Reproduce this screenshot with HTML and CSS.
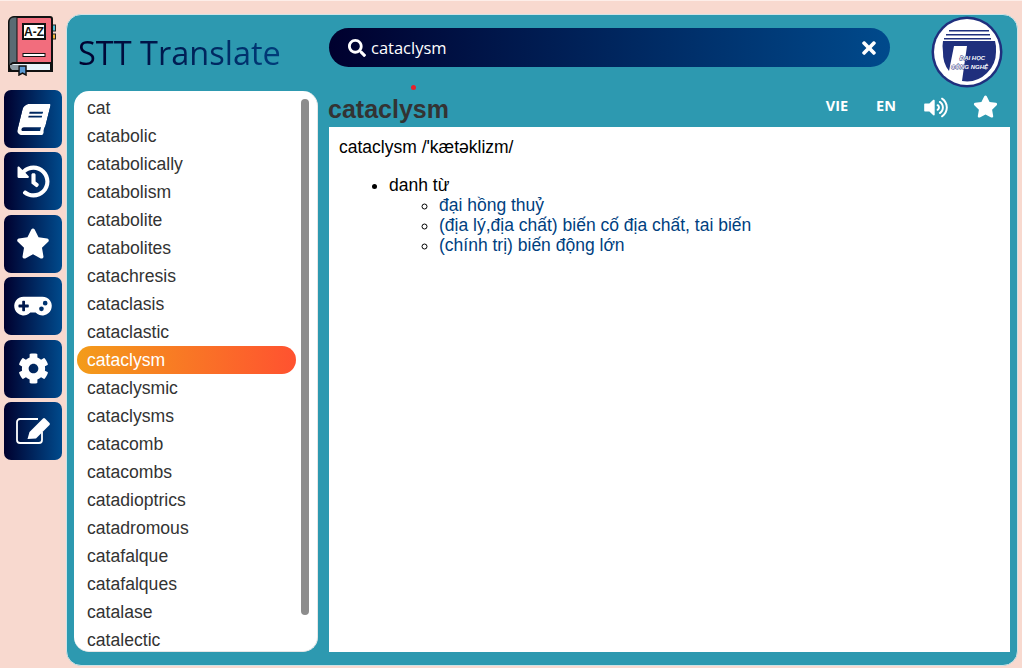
FILE: index.html
```html
<!DOCTYPE html>
<html lang="vi">
<head>
  <meta charset="UTF-8">
  <title>STT Translate</title>
  <link rel="stylesheet" href="styles.css">
</head>
<body>
<div class="app">
  <div class="side">
    <svg class="book-logo" viewBox="0 0 48 60">
      <rect x="44" y="9" width="3.500" height="6" fill="#4fc3dc" stroke="#222" stroke-width="1"/>
      <rect x="44" y="18" width="3.500" height="5" fill="#f5b83d" stroke="#222" stroke-width="1"/>
      <path d="M6 1h36a2 2 0 0 1 2 2v52H1V6a5 5 0 0 1 5-5z" fill="#f26d7d" stroke="#111" stroke-width="2"/>
      <path d="M6 1a5 5 0 0 0-5 5v44h8V1z" fill="#5a6b73" stroke="#111" stroke-width="1"/>
      <path d="M6 47h37v8H6a4 4 0 0 1 0-8z" fill="#e8f4fb" stroke="#111" stroke-width="2"/>
      <path d="M2 49h8v5H6a4 4 0 0 1-4-3z" fill="#8c9aa1"/>
      <path d="M11 50h7v9l-3.500-2-3.500 2z" fill="#5b9bd5" stroke="#111" stroke-width="1.500"/>
      <rect x="15" y="8" width="22" height="15" fill="#fff" stroke="#111" stroke-width="2"/>
      <text x="26" y="20" class="az">A-Z</text>
      <rect x="15" y="37.500" width="22" height="3" fill="#fff" stroke="#111" stroke-width="1"/>
    </svg>
    <div class="nav">
      <a class="nav-btn"><svg class="ic-book" width="27" height="31" viewBox="0 0 448 512"><path d="M448 360V24c0-13.3-10.7-24-24-24H96C43 0 0 43 0 96v320c0 53 43 96 96 96h328c13.3 0 24-10.7 24-24v-16c0-7.5-3.5-14.3-8.9-18.7-4.2-15.4-4.2-59.3 0-74.7 5.4-4.3 8.9-11.1 8.9-18.6zM128 134c0-3.3 2.7-6 6-6h212c3.3 0 6 2.7 6 6v20c0 3.3-2.7 6-6 6H134c-3.3 0-6-2.7-6-6v-20zm0 64c0-3.3 2.7-6 6-6h212c3.3 0 6 2.7 6 6v20c0 3.3-2.7 6-6 6H134c-3.3 0-6-2.7-6-6v-20zm253.4 250H96c-17.7 0-32-14.3-32-32 0-17.6 14.4-32 32-32h285.4c-1.9 17.1-1.9 46.9 0 64z"/></svg></a>
      <a class="nav-btn"><svg width="33" height="33" viewBox="0 0 512 512"><path d="M504 255.531c.253 136.64-111.18 248.372-247.82 248.468-59.015.042-113.223-20.53-155.822-54.911-11.077-8.94-11.905-25.541-1.839-35.607l11.267-11.267c8.609-8.609 22.353-9.551 31.891-1.984C173.062 425.135 212.781 440 256 440c101.705 0 184-82.311 184-184 0-101.705-82.311-184-184-184-48.814 0-93.149 18.969-126.068 49.932l50.754 50.754c10.08 10.08 2.941 27.314-11.313 27.314H24c-8.837 0-16-7.163-16-16V38.627c0-14.254 17.234-21.393 27.314-11.314l49.372 49.372C129.209 34.136 189.552 8 256 8c136.81 0 247.747 110.78 248 247.531zm-180.912 78.784l9.823-12.63c8.138-10.463 6.253-25.542-4.21-33.679L288 256.349V152c0-13.255-10.745-24-24-24h-16c-13.255 0-24 10.745-24 24v135.651l65.409 50.874c10.463 8.137 25.541 6.253 33.679-4.21z"/></svg></a>
      <a class="nav-btn"><svg width="34" height="31" viewBox="0 0 576 512"><path d="M259.3 17.8L194 150.2 47.9 171.5c-26.2 3.8-36.7 36.1-17.7 54.6l105.7 103-25 145.5c-4.5 26.3 23.2 46 46.4 33.7L288 439.6l130.7 68.7c23.2 12.2 50.9-7.4 46.4-33.7l-25-145.5 105.7-103c19-18.5 8.5-50.8-17.7-54.6L382 150.2 316.7 17.8c-11.7-23.6-45.6-23.9-57.4 0z"/></svg></a>
      <a class="nav-btn"><svg width="38" height="30" viewBox="0 0 640 512"><path d="M480.07 96H160a160 160 0 1 0 114.24 272h91.52A160 160 0 1 0 480.07 96zM248 268a12 12 0 0 1-12 12h-52v52a12 12 0 0 1-12 12h-24a12 12 0 0 1-12-12v-52H84a12 12 0 0 1-12-12v-24a12 12 0 0 1 12-12h52v-52a12 12 0 0 1 12-12h24a12 12 0 0 1 12 12v52h52a12 12 0 0 1 12 12zm216 76a40 40 0 1 1 40-40 40 40 0 0 1-40 40zm64-96a40 40 0 1 1 40-40 40 40 0 0 1-40 40z"/></svg></a>
      <a class="nav-btn"><svg width="31" height="31" viewBox="0 0 512 512"><path d="M487.4 315.7l-42.6-24.6c4.3-23.2 4.3-47 0-70.2l42.6-24.6c4.9-2.8 7.1-8.6 5.5-14-11.1-35.6-30-67.8-54.7-94.6-3.8-4.1-10-5.1-14.8-2.3L380.8 110c-17.9-15.4-38.5-27.3-60.8-35.1V25.8c0-5.6-3.9-10.5-9.4-11.7-36.7-8.2-74.3-7.8-109.2 0-5.5 1.2-9.4 6.1-9.4 11.7V75c-22.2 7.9-42.8 19.8-60.8 35.1L88.7 85.5c-4.9-2.8-11-1.9-14.8 2.3-24.7 26.7-43.6 58.9-54.7 94.6-1.7 5.4.6 11.2 5.5 14L67.3 221c-4.3 23.2-4.3 47 0 70.2l-42.6 24.6c-4.9 2.8-7.1 8.6-5.5 14 11.1 35.6 30 67.8 54.7 94.6 3.8 4.1 10 5.1 14.8 2.3l42.6-24.6c17.9 15.4 38.5 27.3 60.8 35.1v49.2c0 5.6 3.9 10.5 9.4 11.7 36.7 8.2 74.3 7.8 109.2 0 5.5-1.2 9.4-6.1 9.4-11.7v-49.2c22.2-7.9 42.8-19.8 60.8-35.1l42.6 24.6c4.9 2.8 11 1.9 14.8-2.3 24.7-26.7 43.6-58.9 54.7-94.6 1.5-5.5-.7-11.3-5.6-14.1zM256 336c-44.1 0-80-35.9-80-80s35.9-80 80-80 80 35.9 80 80-35.9 80-80 80z"/></svg></a>
      <a class="nav-btn"><svg width="36" height="30" viewBox="0 0 36 30">
        <path class="frame" d="M23 3H5a3 3 0 0 0-3 3v18a3 3 0 0 0 3 3h19a3 3 0 0 0 3-3v-8"/>
        <path d="M12.500 23l2-7L28 2.500a1.500 1.500 0 0 1 2 0l4.500 4.500a1.500 1.500 0 0 1 0 2L21 22.500z"/>
      </svg></a>
    </div>
  </div>

  <div class="panel">
    <div class="head">
      <h1 class="brand">STT Translate</h1>
      <div class="search">
        <svg width="18" height="18" viewBox="0 0 512 512"><path d="M505 442.7L405.3 343c-4.5-4.5-10.6-7-17-7H372c27.6-35.3 44-79.7 44-128C416 93.1 322.9 0 208 0S0 93.1 0 208s93.1 208 208 208c48.3 0 92.7-16.4 128-44v16.3c0 6.4 2.5 12.5 7 17l99.7 99.7c9.4 9.4 24.6 9.4 33.9 0l28.3-28.3c9.4-9.4 9.4-24.6.1-34zM208 336c-70.7 0-128-57.2-128-128 0-70.7 57.2-128 128-128 70.7 0 128 57.2 128 128 0 70.7-57.2 128-128 128z"/></svg>
        <span class="search-text">cataclysm</span>
        <svg class="search-x" width="14" height="20" viewBox="0 0 352 512"><path d="M242.72 256l100.07-100.07c12.28-12.28 12.28-32.19 0-44.48l-22.24-22.24c-12.28-12.28-32.19-12.28-44.48 0L176 189.28 75.93 89.21c-12.28-12.28-32.19-12.28-44.48 0L9.21 111.45c-12.28 12.28-12.28 32.19 0 44.48L109.28 256 9.21 356.07c-12.28 12.28-12.28 32.19 0 44.48l22.24 22.24c12.28 12.28 32.2 12.28 44.48 0L176 322.72l100.07 100.07c12.28 12.28 32.2 12.28 44.48 0l22.24-22.24c12.28-12.28 12.28-32.19 0-44.48L242.72 256z"/></svg>
      </div>
      <svg class="uni-logo" viewBox="0 0 72 72">
        <circle cx="36" cy="36" r="35.500" fill="#1f2f7d"/>
        <circle cx="36" cy="36" r="33" fill="#fff"/>
        <path d="M12 25h52a29 29 0 0 1 1 11 29 29 0 0 1-9 21 29 29 0 0 1-25 8l5-35H23l-5 25a29 29 0 0 1-6-19 29 29 0 0 1 0-11z" fill="#1f2f7d"/>
        <path d="M18 14h40v1.500H18zM15 18h44v1.500H15zM13 22h47v1.500H13z" fill="#1f2f7d"/>
        <text x="41.500" y="44" class="uni-text">ĐẠI HỌC</text>
        <text x="38.500" y="53" class="uni-text">CÔNG NGHỆ</text>
      </svg>
    </div>

    <div class="body">
      <div class="list-box">
        <ul class="words">
          <li>cat</li>
          <li>catabolic</li>
          <li>catabolically</li>
          <li>catabolism</li>
          <li>catabolite</li>
          <li>catabolites</li>
          <li>catachresis</li>
          <li>cataclasis</li>
          <li>cataclastic</li>
          <li class="current">cataclysm</li>
          <li>cataclysmic</li>
          <li>cataclysms</li>
          <li>catacomb</li>
          <li>catacombs</li>
          <li>catadioptrics</li>
          <li>catadromous</li>
          <li>catafalque</li>
          <li>catafalques</li>
          <li>catalase</li>
          <li>catalectic</li>
        </ul>
        <div class="thumb"></div>
      </div>

      <div class="detail">
        <span class="dot"></span>
        <div class="detail-top">
          <h2 class="word">cataclysm</h2>
          <div class="tools">
            <span class="lang">VIE</span>
            <span class="lang">EN</span>
            <svg class="speaker" width="24" height="21" viewBox="0 0 576 512"><path d="M215.03 71.05L126.06 160H24c-13.26 0-24 10.74-24 24v144c0 13.25 10.74 24 24 24h102.06l88.97 88.95c15.03 15.03 40.97 4.47 40.97-16.97V88.02c0-21.46-25.96-31.98-40.97-16.97zm233.32-51.08c-11.17-7.33-26.18-4.24-33.51 6.95-7.34 11.17-4.22 26.18 6.95 33.51 66.27 43.49 105.82 116.6 105.82 195.58 0 78.98-39.55 152.09-105.82 195.58-11.17 7.32-14.29 22.34-6.95 33.5 7.04 10.71 21.93 14.56 33.51 6.95C528.27 439.58 576 351.33 576 256S528.27 72.43 448.35 19.97zM480 256c0-63.53-32.06-121.94-85.77-156.24-11.19-7.14-26.03-3.82-33.12 7.46s-3.78 26.21 7.41 33.36C408.27 165.97 432 209.11 432 256s-23.73 90.03-63.48 115.42c-11.19 7.14-14.5 22.07-7.41 33.36 6.51 10.36 21.12 15.14 33.12 7.46C447.94 377.94 480 319.53 480 256zm-141.77-76.87c-11.58-6.33-26.19-2.16-32.61 9.45-6.39 11.61-2.16 26.2 9.45 32.61C327.98 228.28 336 241.63 336 256c0 14.38-8.02 27.72-20.92 34.81-11.61 6.41-15.84 21-9.45 32.61 6.43 11.66 21.05 15.8 32.61 9.45 28.23-15.55 45.77-45 45.77-76.88s-17.54-61.32-45.78-76.86z"/></svg>
            <svg width="25" height="23" viewBox="0 0 576 512"><path d="M259.3 17.8L194 150.2 47.9 171.5c-26.2 3.8-36.7 36.1-17.7 54.6l105.7 103-25 145.5c-4.5 26.3 23.2 46 46.4 33.7L288 439.6l130.7 68.7c23.2 12.2 50.9-7.4 46.4-33.7l-25-145.5 105.7-103c19-18.5 8.5-50.8-17.7-54.6L382 150.2 316.7 17.8c-11.7-23.6-45.6-23.9-57.4 0z"/></svg>
          </div>
        </div>
        <div class="content">
          <p class="phon">cataclysm /'kætəklizm/</p>
          <ul class="pos">
            <li>danh từ
              <ul class="means">
                <li>đại hồng thuỷ</li>
                <li>(địa lý,địa chất) biến cố địa chất, tai biến</li>
                <li>(chính trị) biến động lớn</li>
              </ul>
            </li>
          </ul>
        </div>
      </div>
    </div>
  </div>
</div>
</body>
</html>
```

FILE: styles.css
```css
* {
  box-sizing: border-box;
}

html, body {
  margin: 0;
  height: 100%;
  overflow: hidden;
}

body {
  background: #f8d9cf;
  font-family: "Liberation Sans", Arial, sans-serif;
}

svg {
  fill: #fff;
  display: block;
}

.app {
  display: flex;
  height: 668px;
  padding: 13px 4px 2px 4px;
  border-top: 1px solid #fdeee9;
}

/* left column */
.side {
  width: 62px;
  flex: none;
}

.book-logo {
  width: 48px;
  height: 60px;
  margin: 2px 0 0 4px;
  fill: none;
}

.az {
  font: bold 12px "Liberation Sans", Arial, sans-serif;
  fill: #111;
  text-anchor: middle;
}

.nav {
  display: flex;
  flex-direction: column;
  gap: 4.4px;
  margin-top: 14px;
}

.nav-btn {
  display: flex;
  align-items: center;
  justify-content: center;
  width: 58px;
  height: 58px;
  border-radius: 7px;
  background: linear-gradient(to right, #00002e, #004a8c);
}

.ic-book {
  transform: skewX(-14deg);
}

.frame {
  fill: none;
  stroke: #fff;
  stroke-width: 1.800px;
}

/* main panel */
.panel {
  flex: 1;
  display: flex;
  flex-direction: column;
  background: #2d99b0;
  border: 1px solid #cfe3e6;
  border-radius: 15px;
  padding: 0 7px 13px 7px;
}

.head {
  display: flex;
  align-items: flex-start;
  height: 76px;
  flex: none;
}

.brand {
  width: 251px;
  margin: 16px 0 0 4px;
  font: 400 32.500px/44px "Open Sans", sans-serif;
  background: linear-gradient(to right, #00002e, #004a8c);
  -webkit-background-clip: text;
  background-clip: text;
  color: transparent;
  white-space: nowrap;
}

.search {
  display: flex;
  align-items: center;
  width: 561px;
  height: 39px;
  margin-top: 13px;
  padding: 0 14px 0 19px;
  border-radius: 20px;
  background: linear-gradient(to right, #00002e, #004a8c);
  color: #fff;
}

.search-text {
  flex: 1;
  margin-left: 5px;
  font: 16.500px "Open Sans", sans-serif;
}

.uni-logo {
  width: 72px;
  height: 72px;
  margin: 1px 0 0 41px;
}

.uni-text {
  font: italic bold 6px "Liberation Sans", Arial, sans-serif;
  fill: #fff;
  stroke: #1f2f7d;
  stroke-width: .8px;
  paint-order: stroke;
  text-anchor: middle;
}

.body {
  flex: 1;
  display: flex;
  min-height: 0;
}

/* word list */
.list-box {
  position: relative;
  width: 244px;
  margin-right: 11px;
  flex: none;
  background: #fff;
  border-radius: 15px;
  border-right: 1px solid #e6e6e6;
  border-bottom: 1px solid #e6e6e6;
  overflow: hidden;
}

.words {
  margin: 0;
  padding: 3px 0 0 3px;
  list-style: none;
}

.words li {
  width: 219px;
  height: 28px;
  padding-left: 10px;
  font-size: 17.600px;
  line-height: 28px;
  color: #333;
  border-radius: 14px;
}

.words li.current {
  color: #fff;
  background: linear-gradient(to right, #f39c1a, #ff5230);
}

.thumb {
  position: absolute;
  left: 227px;
  top: 8px;
  width: 8px;
  height: 516px;
  border-radius: 4px;
  background: #8c8c8c;
}

/* detail */
.detail {
  position: relative;
  flex: 1;
  display: flex;
  flex-direction: column;
}

.dot {
  position: absolute;
  left: 82px;
  top: -6px;
  width: 5px;
  height: 5px;
  border-radius: 50%;
  background: #e8202a;
}

.detail-top {
  display: flex;
  align-items: center;
  justify-content: space-between;
  height: 36px;
  flex: none;
}

.word {
  margin: 0 0 0 -1px;
  font-size: 25px;
  font-weight: bold;
  line-height: 36px;
  color: #333;
}

.tools {
  display: flex;
  align-items: center;
  gap: 28px;
  margin: 0 12px 5px 0;
}

.speaker {
  margin: 2px -3px 0 0;
}

.lang {
  margin-bottom: 3px;
  font: 700 14.500px "Open Sans", sans-serif;
  color: #fff;
}

.content {
  flex: 1;
  width: 681px;
  background: #fff;
  padding: 10px;
  font-size: 17.500px;
  line-height: 20px;
  color: #000;
}

.phon {
  margin: 0 0 18px 0;
}

.pos {
  margin: 0;
  padding-left: 50px;
}

.means {
  margin: 0;
  padding-left: 50px;
  color: #003f7f;
  list-style: circle;
}

.means li::marker {
  color: #000;
}
```
